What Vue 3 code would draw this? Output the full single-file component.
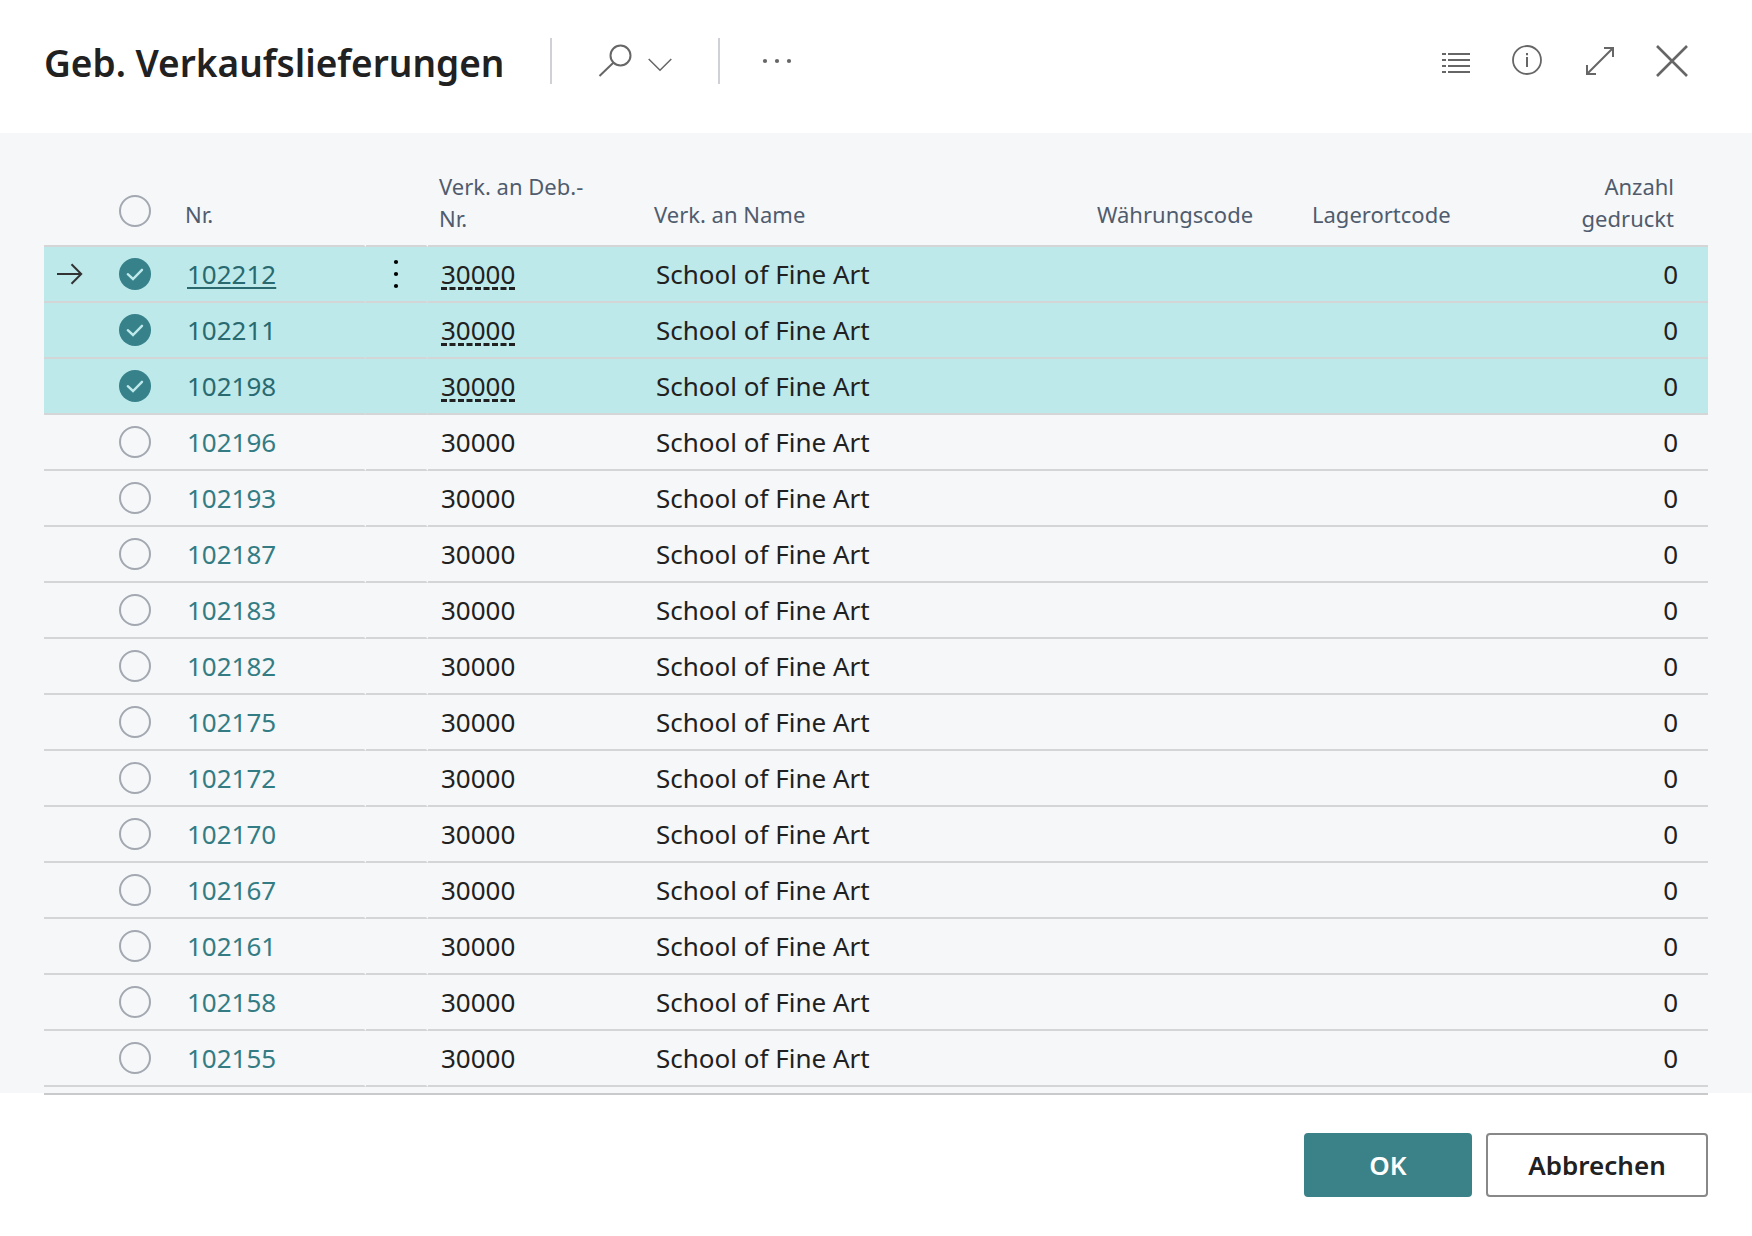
<script setup>
import { ref, computed } from 'vue'

const numbers = [
  '102212', '102211', '102198', '102196', '102193',
  '102187', '102183', '102182', '102175', '102172',
  '102170', '102167', '102161', '102158', '102155',
]

const rows = ref(
  numbers.map((nr, i) => ({
    nr,
    customer: '30000',
    name: 'School of Fine Art',
    currency: '',
    location: '',
    printed: 0,
    selected: i < 3,
  }))
)

const current = ref('102212')

const allSelected = computed({
  get: () => rows.value.every((row) => row.selected),
  set: (value) => rows.value.forEach((row) => (row.selected = value)),
})
</script>

<template>
  <div class="dialog">
    <header class="bar">
      <h1>Geb. Verkaufslieferungen</h1>
      <span class="divider"></span>
      <button class="icon search" type="button" aria-label="Suchen">
        <svg width="34" height="34" viewBox="0 0 34 34">
          <circle cx="22.5" cy="11.5" r="10" stroke-width="2" />
          <path d="M15.3 18.7L1.5 32" stroke-width="2" />
        </svg>
        <svg width="24" height="14" viewBox="0 0 24 14">
          <path d="M0.7 1L12 12.3L23.3 1" stroke-width="1.5" />
        </svg>
      </button>
      <span class="divider"></span>
      <button class="icon more" type="button" aria-label="Weitere Optionen">
        <svg width="30" height="6" viewBox="0 0 30 6">
          <g class="dots">
            <circle cx="3" cy="3" r="2.1" />
            <circle cx="15" cy="3" r="2.1" />
            <circle cx="27" cy="3" r="2.1" />
          </g>
        </svg>
      </button>
      <div class="tools">
        <button class="icon" type="button" aria-label="Liste">
          <svg width="32" height="32" viewBox="0 0 32 32">
            <path d="M2 9h4M8 9h22M2 15h4M8 15h22M2 21h4M8 21h22M2 27h4M8 27h22" stroke-width="2" />
          </svg>
        </button>
        <button class="icon" type="button" aria-label="Info">
          <svg width="32" height="32" viewBox="0 0 32 32">
            <circle cx="15" cy="15" r="14" stroke-width="1.8" />
            <path d="M15 12v10M15 8v2.2" stroke-width="2" />
          </svg>
        </button>
        <button class="icon" type="button" aria-label="Maximieren">
          <svg width="32" height="32" viewBox="0 0 32 32">
            <path d="M3 29L29 3M20 3h9v9M3 20v9h9" stroke-width="2" />
          </svg>
        </button>
        <button class="icon" type="button" aria-label="Schließen">
          <svg width="32" height="32" viewBox="0 0 32 32">
            <path d="M1 1L31 31M31 1L1 31" stroke-width="2.6" />
          </svg>
        </button>
      </div>
    </header>

    <main class="panel">
      <table>
        <colgroup>
          <col class="w-arrow">
          <col class="w-check">
          <col class="w-nr">
          <col class="w-menu">
          <col class="w-code">
          <col>
          <col class="w-code">
          <col class="w-code">
          <col class="w-printed">
        </colgroup>
        <thead>
          <tr>
            <th></th>
            <th class="check">
              <input v-model="allSelected" type="checkbox" aria-label="Alle auswählen">
            </th>
            <th class="slit">Nr.</th>
            <th class="slit"></th>
            <th class="double">Verk. an Deb.-Nr.</th>
            <th>Verk. an Name</th>
            <th>Währungscode</th>
            <th>Lagerortcode</th>
            <th class="double right">Anzahl gedruckt</th>
          </tr>
        </thead>
        <tbody>
          <tr
            v-for="row in rows"
            :key="row.nr"
            :class="{ selected: row.selected, current: row.nr === current }"
            @click="current = row.nr"
          >
            <td class="arrow">
              <svg v-if="row.nr === current" width="26" height="22" viewBox="0 0 26 22">
                <path d="M0 11h24M14.5 1.3L24.2 11L14.5 20.7" stroke-width="2" />
              </svg>
            </td>
            <td class="check">
              <input v-model="row.selected" type="checkbox" :aria-label="row.nr + ' auswählen'">
            </td>
            <td class="slit"><a href="#" @click.prevent>{{ row.nr }}</a></td>
            <td class="slit menu">
              <button v-if="row.nr === current" type="button" aria-label="Zeilenmenü">
                <svg width="6" height="30" viewBox="0 0 6 30">
                  <circle cx="3" cy="3" r="2.1" />
                  <circle cx="3" cy="15" r="2.1" />
                  <circle cx="3" cy="27" r="2.1" />
                </svg>
              </button>
            </td>
            <td><span class="customer">{{ row.customer }}</span></td>
            <td>{{ row.name }}</td>
            <td>{{ row.currency }}</td>
            <td>{{ row.location }}</td>
            <td class="right">{{ row.printed }}</td>
          </tr>
        </tbody>
      </table>
    </main>

    <footer>
      <div class="actions">
        <button class="ok" type="button">OK</button>
        <button class="cancel" type="button">Abbrechen</button>
      </div>
    </footer>
  </div>
</template>

<style>
body {
  margin: 0;
  background: #fff;
}
</style>

<style scoped>
.dialog {
  font-family: "Noto Sans", "Open Sans", sans-serif;
  font-size: 26px;
  color: #212121;
}

button {
  font: inherit;
  color: inherit;
  cursor: pointer;
}

.bar {
  display: flex;
  align-items: center;
  box-sizing: border-box;
  height: 133px;
  padding: 0 64px 12px 44px;
}

h1 {
  margin: 0;
  padding-top: 4px;
  font-size: 37px;
  font-weight: 600;
  line-height: 54px;
  white-space: nowrap;
}

.divider {
  width: 2px;
  height: 46px;
  margin: 0 46px;
  background: #d0d0d7;
}

.icon {
  display: flex;
  align-items: center;
  padding: 0;
  border: 0;
  background: none;
}

.icon svg {
  fill: none;
  stroke: #666;
}

.icon .dots {
  fill: #666;
  stroke: none;
}

.search {
  gap: 16px;
}

.search svg:last-child {
  margin-top: 8px;
}

.more {
  margin-left: -4px;
}

.tools {
  display: flex;
  gap: 40px;
  margin-left: auto;
}

.panel {
  padding: 28px 44px 6px;
  background: #f5f7f9;
}

table {
  width: 100%;
  table-layout: fixed;
  border-spacing: 0;
}

.w-arrow { width: 52px; }
.w-check { width: 78px; }
.w-nr { width: 192px; }
.w-menu { width: 62px; }
.w-code { width: 215px; }
.w-printed { width: 192px; }

th,
td {
  box-sizing: border-box;
  border-bottom: 2px solid #d3d5d7;
  text-align: left;
  white-space: nowrap;
}

th {
  height: 86px;
  padding: 0 11px 15px;
  vertical-align: bottom;
  font-size: 22px;
  font-weight: 400;
  line-height: 32px;
  color: #505c6d;
}

th.double {
  padding-right: 40px;
  padding-bottom: 11px;
  white-space: normal;
}

th.double.right {
  padding-left: 40px;
  padding-right: 34px;
}

td {
  height: 56px;
  padding: 0 13px;
  line-height: 54px;
}

.right {
  padding-right: 30px;
  text-align: right;
}

/* the clear side border cuts a small notch into the row line */
.slit {
  border-right: 2px solid transparent;
}

.selected td {
  background: #bde9eb;
}

.arrow svg {
  display: block;
  fill: none;
  stroke: #333;
}

th.check,
td.check {
  padding: 0;
  text-align: center;
}

th.check {
  padding-bottom: 18px;
}

.check input {
  appearance: none;
  display: block;
  box-sizing: border-box;
  width: 32px;
  height: 32px;
  margin: 0 auto;
  border: 2px solid #a3a8b1;
  border-radius: 50%;
}

.check input:checked {
  border: 0;
  background: #37818a url("data:image/svg+xml,%3Csvg xmlns='http://www.w3.org/2000/svg' viewBox='0 0 32 32'%3E%3Cpath d='M8.8 16.2L14 21L23 11.8' fill='none' stroke='%23bde9eb' stroke-width='2.4' stroke-linecap='round'/%3E%3C/svg%3E");
}

td a {
  color: #337c83;
  text-decoration: none;
}

.selected a {
  color: #286a70;
}

.current a {
  text-decoration: underline 2px;
  text-underline-offset: 3px;
  text-decoration-skip-ink: none;
}

.selected .customer {
  text-decoration: underline dashed 3px;
  text-underline-offset: 3px;
  text-decoration-skip-ink: none;
}

.menu {
  padding: 0;
}

.menu button {
  display: block;
  margin: 0 auto;
  padding: 0;
  border: 0;
  background: none;
}

.menu svg {
  display: block;
}

footer {
  padding: 0 44px 39px;
}

.actions {
  display: flex;
  justify-content: flex-end;
  gap: 14px;
  padding-top: 38px;
  border-top: 2px solid #c8cacc;
}

.actions button {
  box-sizing: border-box;
  height: 64px;
  padding: 0 40px;
  border: 2px solid #888;
  border-radius: 4px;
  background: #fff;
  font-weight: 600;
}

.actions .ok {
  min-width: 168px;
  border-color: #3a8288;
  background: #3a8288;
  color: #fff;
}

.actions .cancel {
  min-width: 222px;
}
</style>
